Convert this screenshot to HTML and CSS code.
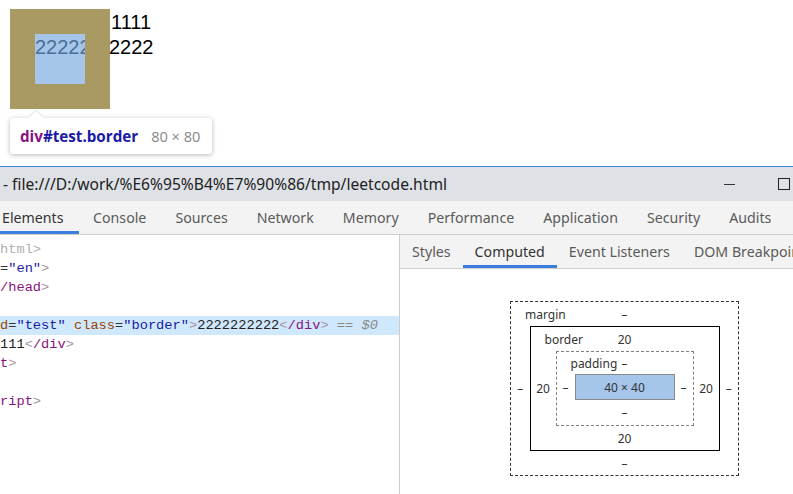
FILE: index.html
```html
<!DOCTYPE html>
<html lang="en">
<head>
<meta charset="utf-8">
<title>leetcode</title>
<link rel="stylesheet" href="styles.css">
</head>
<body>
<div class="page">
  <div class="demo">
    <div class="box"><div class="content">2222222222</div></div>
    <div class="lines">
      <div class="l1">1111</div>
      <div class="l2">2222</div>
    </div>
  </div>
  <div class="tooltip">
    <span class="arrow"></span>
    <span class="tt-tag">div</span><span class="tt-id">#test.border</span>
    <span class="tt-size">80 × 80</span>
  </div>
</div>
<div class="devtools">
  <div class="titlebar">
    <span class="title">- file:///D:/work/%E6%95%B4%E7%90%86/tmp/leetcode.html</span>
    <span class="win-min"></span>
    <span class="win-max"></span>
  </div>
  <div class="tabs">
    <span class="tab active">Elements</span>
    <span class="tab">Console</span>
    <span class="tab">Sources</span>
    <span class="tab">Network</span>
    <span class="tab">Memory</span>
    <span class="tab">Performance</span>
    <span class="tab">Application</span>
    <span class="tab">Security</span>
    <span class="tab">Audits</span>
  </div>
  <div class="main">
    <div class="elements">
      <div class="code-line"><span class="dim">html&gt;</span></div>
      <div class="code-line"><span class="eq">=</span><span class="av">"en"</span><span class="br">&gt;</span></div>
      <div class="code-line"><span class="tn">/head</span><span class="br">&gt;</span></div>
      <div class="code-line"></div>
      <div class="code-line sel"><span class="an">d</span><span class="eq">=</span><span class="av">"test"</span> <span class="an">class</span><span class="eq">=</span><span class="av">"border"</span><span class="br">&gt;</span>2222222222<span class="br">&lt;</span><span class="tn">/div</span><span class="br">&gt;</span> <span class="ref">== <i>$0</i></span></div>
      <div class="code-line">111<span class="br">&lt;</span><span class="tn">/div</span><span class="br">&gt;</span></div>
      <div class="code-line"><span class="tn">t</span><span class="br">&gt;</span></div>
      <div class="code-line"></div>
      <div class="code-line"><span class="tn">ript</span><span class="br">&gt;</span></div>
    </div>
    <div class="sidebar">
      <div class="subtabs">
        <span class="subtab">Styles</span>
        <span class="subtab active">Computed</span>
        <span class="subtab">Event Listeners</span>
        <span class="subtab">DOM Breakpoints</span>
      </div>
      <div class="boxmodel-wrap">
        <div class="bm margin">
          <div class="bm-row top"><span class="bm-label">margin</span><span class="bm-val">–</span></div>
          <div class="bm-mid">
            <span class="side">–</span>
            <div class="bm border">
              <div class="bm-row top"><span class="bm-label">border</span><span class="bm-val">20</span></div>
              <div class="bm-mid">
                <span class="side">20</span>
                <div class="bm padding">
                  <div class="bm-row top prow"><span class="bm-label">padding</span><span class="bm-val pv">–</span></div>
                  <div class="bm-mid">
                    <span class="side">–</span>
                    <div class="bm content-box">40 × 40</div>
                    <span class="side">–</span>
                  </div>
                  <div class="bm-row bottom"><span class="bm-val">–</span></div>
                </div>
                <span class="side">20</span>
              </div>
              <div class="bm-row bottom"><span class="bm-val">20</span></div>
            </div>
            <span class="side">–</span>
          </div>
          <div class="bm-row bottom"><span class="bm-val">–</span></div>
        </div>
      </div>
    </div>
  </div>
</div>
</body>
</html>
```
FILE: styles.css
```css
* { box-sizing: border-box; }
html, body { margin: 0; padding: 0; background: #fff; }
body { width: 793px; height: 494px; overflow: hidden; font-family: "Noto Sans", "Open Sans", sans-serif; }

.page { position: relative; height: 166px; padding: 9px 0 0 10px; }
.demo { display: flex; align-items: flex-start; font-family: "Liberation Sans", Arial, sans-serif; font-size: 20px; line-height: 25px; padding-top: 1px; }
.box { width: 100px; height: 100px; margin-top: -1px; border: 25px solid #a89a62; background: #a5c6ea; }
.content { width: 50px; height: 50px; overflow: hidden; white-space: nowrap; color: #4a6f94; line-height: 25px; padding-top: 1px; }
.lines { color: #000; }
.l1 { padding-left: 1px; }
.l2 { margin-left: -1px; }

.tooltip { position: absolute; left: 10px; top: 118px; width: 202px; height: 36px; background: #fff; border-radius: 3px; box-shadow: 0 1px 5px rgba(0,0,0,0.28); display: flex; align-items: center; padding-left: 10px; font-family: "Open Sans", "Noto Sans", sans-serif; font-size: 15.2px; }
.arrow { position: absolute; left: 19px; top: -7px; width: 0; height: 0; border-left: 7px solid transparent; border-right: 7px solid transparent; border-bottom: 7px solid #fff; filter: drop-shadow(0 -1px 1px rgba(0,0,0,0.12)); }
.tt-tag { color: #881280; font-weight: 700; }
.tt-id { color: #1a1aa6; font-weight: 700; }
.tt-size { color: #888; margin-left: 13px; font-size: 14.6px; }

.devtools { border-top: 1px solid #3a8ad8; }
.titlebar { height: 34px; background: #dee1e6; display: flex; align-items: center; padding-left: 3px; color: #222; font-size: 15.6px; }
.title { flex: 1; white-space: nowrap; }
.win-min { width: 11px; height: 1px; background: #333; margin-right: 43px; }
.win-max { width: 12px; height: 12px; border: 1px solid #222; margin-right: 3px; }

.tabs { height: 34px; background: #f3f3f3; border-bottom: 1px solid #cfcfcf; display: flex; align-items: stretch; white-space: nowrap; overflow: hidden; }
.tab { display: flex; align-items: center; padding: 2px 14.5px 0; color: #5a5a5a; font-size: 14.2px; border-bottom: 3px solid transparent; }
.tab:first-child { padding-left: 2px; padding-right: 15px; }
.tab.active { color: #333; border-bottom-color: #3b7de0; }

.main { display: flex; height: 259px; }
.elements { width: 400px; border-right: 1px solid #cccccc; padding-top: 5px; font-family: "Liberation Mono", monospace; font-size: 13.7px; color: #222; overflow: hidden; }
.code-line { height: 19px; line-height: 19px; white-space: nowrap; }
.code-line.sel { background: #cfe8fc; }
.dim { color: #b0b0b0; }
.eq { color: #333; }
.av { color: #1a1aa6; }
.an { color: #994500; }
.tn { color: #881280; }
.br { color: #a894a6; }
.ref { color: #888; }
.ref i { font-style: italic; }

.sidebar { flex: 1; display: flex; flex-direction: column; overflow: hidden; }
.subtabs { height: 34px; background: #f3f3f3; border-bottom: 1px solid #cfcfcf; display: flex; white-space: nowrap; }
.subtab { display: flex; align-items: center; padding: 2px 12px 0; font-size: 14.2px; color: #5a5a5a; border-bottom: 3px solid transparent; }
.subtab.active { color: #333; border-bottom-color: #3b7de0; }

.boxmodel-wrap { padding: 32px 0 0 110px; }
.bm { font-size: 12px; color: #333; }
.margin { width: 229px; height: 175px; border: 1px dashed #333; display: flex; flex-direction: column; }
.border { width: 190px; height: 125px; border: 1px solid #000; display: flex; flex-direction: column; }
.padding { width: 138px; height: 75px; border: 1px dashed #808080; display: flex; flex-direction: column; }
.content-box { width: 100px; height: 26px; background: #a5c6ea; border: 1px solid #8a8a8a; display: flex; align-items: center; justify-content: center; }
.bm-row { height: 24px; display: flex; align-items: center; position: relative; justify-content: center; }
.bm-row.prow { height: 22px; }
.bm-label { position: absolute; left: 14px; }
.pv { position: absolute; left: 65px; }
.bm-mid { display: flex; align-items: center; justify-content: space-between; }
.side { flex: 1; text-align: center; }
```
